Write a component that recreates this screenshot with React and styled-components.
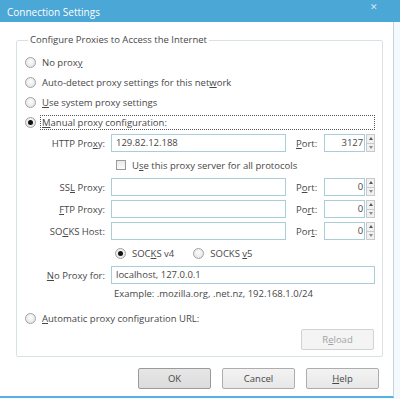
import React from "react";
import styled, { createGlobalStyle } from "styled-components";

const Global = createGlobalStyle`
  html, body {
    margin: 0;
    padding: 0;
    background: #fff;
  }
  body {
    font-family: "Open Sans", "Noto Sans", sans-serif;
    font-size: 9.5px;
    color: #474747;
  }
`;

const Window = styled.div`
  width: 400px;
  height: 399px;
  display: flex;
  flex-direction: column;
  background: #f3f9fc;
  overflow: hidden;
`;

const TitleBar = styled.div`
  height: 22px;
  flex: none;
  background: #4aa7d6;
  color: #fff;
  display: flex;
  justify-content: space-between;
  padding-left: 7px;
  font-size: 10px;
  line-height: 25px;
`;

const Close = styled.span`
  color: #cfe9f6;
  font-size: 9px;
  line-height: 14px;
  margin-right: 22px;
`;

const Body = styled.div`
  flex: 1;
  display: flex;
  flex-direction: column;
  padding: 11px 0 0 16px;
  background: #fff;
  border-right: 1px solid #c3d6e0;
  border-bottom: 2px solid #58b2df;
  margin-right: 6px;
  margin-bottom: 1px;
`;

const Group = styled.fieldset`
  margin: 0 10px 0 0;
  padding: 5px 7px 6px 8px;
  border: 1px solid #d8e1e6;
  border-radius: 2px;
  min-width: 0;
`;

const Legend = styled.legend`
  padding: 0 2px;
  margin-left: 3px;
  line-height: 14px;
`;

const OptionRow = styled.div`
  height: 20px;
  display: flex;
  align-items: center;
  gap: 6px;
`;

const Radio = styled.span`
  width: 11px;
  height: 11px;
  flex: none;
  box-sizing: border-box;
  border-radius: 50%;
  border: 1px solid #a2a2a2;
  margin-left: ${(p) => p.$gapLeft || 0}px;
  background: radial-gradient(circle at 50% 40%, #fdfdfd, #dedede);
  display: flex;
  align-items: center;
  justify-content: center;
  &::after {
    content: "";
    width: 5px;
    height: 5px;
    border-radius: 50%;
    background: ${(p) => (p.$checked ? "#111" : "transparent")};
  }
`;

const Check = styled.span`
  width: 10px;
  height: 10px;
  flex: none;
  box-sizing: border-box;
  border: 1px solid #9a9a9a;
  background: linear-gradient(#e9e9e9, #fafafa);
`;

const Text = styled.span`
  white-space: nowrap;
  color: ${(p) => (p.$muted ? "#a2a2a2" : "inherit")};
  ${(p) =>
    p.$focus &&
    `
    flex: 1;
    border: 1px dotted #555;
    line-height: 13px;
    padding: 0 1px;
    margin-left: -2px;
  `}
`;

const Key = styled.u`
  text-decoration-thickness: 1px;
  text-underline-offset: 1px;
`;

const Manual = styled.div`
  display: grid;
  grid-template-columns: 86px 175px 38px 51px;
  grid-auto-rows: 22px;
  align-items: center;
`;

const FieldLabel = styled.label`
  text-align: right;
  padding-right: 6px;
  white-space: nowrap;
`;

const PortLabel = styled.label`
  padding-left: 10px;
`;

const Input = styled.div`
  height: 18px;
  box-sizing: border-box;
  border: 1px solid #a9cdd9;
  background: #fff;
  padding: 0 4px;
  line-height: 16px;
  white-space: nowrap;
  overflow: hidden;
  grid-column: ${(p) => p.$span || "auto"};
`;

const PortBox = styled.div`
  display: flex;
  height: 18px;
`;

const PortInput = styled(Input)`
  width: 42px;
  text-align: right;
  padding: 0 1px 0 0;
`;

const Spinner = styled.div`
  width: 9px;
  display: flex;
  flex-direction: column;
  margin-left: 1px;
`;

const SpinHalf = styled.div`
  flex: 1;
  box-sizing: border-box;
  border: 1px solid #c9c9c9;
  background: #f1f1f1;
  display: flex;
  align-items: center;
  justify-content: center;
  & + & {
    border-top: none;
  }
  &::after {
    content: "";
    border-left: 2px solid transparent;
    border-right: 2px solid transparent;
    ${(p) =>
      p.$down
        ? "border-top: 3px solid #8c8c8c;"
        : "border-bottom: 3px solid #555;"}
  }
`;

const Inline = styled.div`
  grid-column: 2 / 5;
  display: flex;
  align-items: center;
  gap: 6px;
  padding-left: ${(p) => p.$pad || 0}px;
`;

const Hint = styled.div`
  grid-column: 2 / 5;
  padding-left: 3px;
  height: 16px;
  line-height: 16px;
  align-self: start;
`;

const ReloadRow = styled.div`
  display: flex;
  justify-content: flex-end;
  padding: 1px 1px 0 0;
`;

const Button = styled.div`
  width: 73px;
  height: 21px;
  box-sizing: border-box;
  display: flex;
  align-items: center;
  justify-content: center;
  border: 1px solid ${(p) => (p.$disabled ? "#d2d2d2" : p.$default ? "#9a9a9a" : "#adadad")};
  border-radius: 2px;
  color: ${(p) => (p.$disabled ? "#a3a3a3" : "#474747")};
  background: ${(p) =>
    p.$disabled
      ? "#f4f4f4"
      : p.$default
      ? "linear-gradient(#e6e6e6, #dcdcdc)"
      : "linear-gradient(#f3f3f3, #e7e7e7)"};
`;

const Buttons = styled.div`
  display: flex;
  justify-content: flex-end;
  gap: 11px;
  margin: 11px 14px 0 0;
`;

const Port = ({ value, k }) => (
  <>
    <PortLabel>{k}</PortLabel>
    <PortBox>
      <PortInput>{value}</PortInput>
      <Spinner>
        <SpinHalf />
        <SpinHalf $down />
      </Spinner>
    </PortBox>
  </>
);

export default function App() {
  return (
    <>
      <Global />
      <Window>
        <TitleBar>
          <span>Connection Settings</span>
          <Close>✕</Close>
        </TitleBar>
        <Body>
          <Group>
            <Legend>Configure Proxies to Access the Internet</Legend>
            <OptionRow>
              <Radio />
              <Text>
                No prox<Key>y</Key>
              </Text>
            </OptionRow>
            <OptionRow>
              <Radio />
              <Text>
                Auto-detect proxy settings for this net<Key>w</Key>ork
              </Text>
            </OptionRow>
            <OptionRow>
              <Radio />
              <Text>
                <Key>U</Key>se system proxy settings
              </Text>
            </OptionRow>
            <OptionRow>
              <Radio $checked />
              <Text $focus>
                <Key>M</Key>anual proxy configuration:
              </Text>
            </OptionRow>
            <Manual>
              <FieldLabel>
                HTTP Pro<Key>x</Key>y:
              </FieldLabel>
              <Input>129.82.12.188</Input>
              <Port
                value="3127"
                k={
                  <>
                    <Key>P</Key>ort:
                  </>
                }
              />

              <Inline $pad={5}>
                <Check />
                <Text>
                  U<Key>s</Key>e this proxy server for all protocols
                </Text>
              </Inline>

              <FieldLabel>
                SS<Key>L</Key> Proxy:
              </FieldLabel>
              <Input />
              <Port
                value="0"
                k={
                  <>
                    P<Key>o</Key>rt:
                  </>
                }
              />

              <FieldLabel>
                <Key>F</Key>TP Proxy:
              </FieldLabel>
              <Input />
              <Port
                value="0"
                k={
                  <>
                    Po<Key>r</Key>t:
                  </>
                }
              />

              <FieldLabel>
                SO<Key>C</Key>KS Host:
              </FieldLabel>
              <Input />
              <Port
                value="0"
                k={
                  <>
                    Por<Key>t</Key>:
                  </>
                }
              />

              <Inline $pad={4}>
                <Radio $checked />
                <Text>
                  SOC<Key>K</Key>S v4
                </Text>
                <Radio $gapLeft={13} />
                <Text>
                  SOCKS <Key>v</Key>5
                </Text>
              </Inline>

              <FieldLabel>
                <Key>N</Key>o Proxy for:
              </FieldLabel>
              <Input $span="2 / 5">localhost, 127.0.0.1</Input>

              <Hint>Example: .mozilla.org, .net.nz, 192.168.1.0/24</Hint>
            </Manual>
            <OptionRow>
              <Radio />
              <Text>
                <Key>A</Key>utomatic proxy configuration URL:
              </Text>
            </OptionRow>
            <ReloadRow>
              <Button $disabled>
                R<Key>e</Key>load
              </Button>
            </ReloadRow>
          </Group>
          <Buttons>
            <Button $default>OK</Button>
            <Button>Cancel</Button>
            <Button>
              <Key>H</Key>elp
            </Button>
          </Buttons>
        </Body>
      </Window>
    </>
  );
}
